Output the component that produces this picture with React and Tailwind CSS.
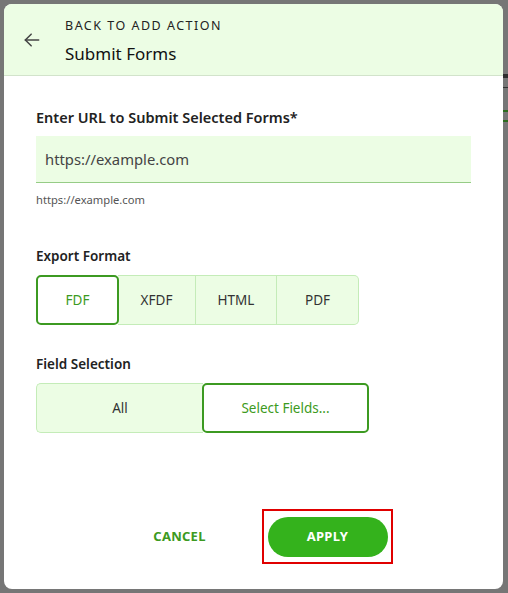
import React from "react";

export default function App() {
  const font = { fontFamily: '"Noto Sans", "Open Sans", sans-serif' };
  return (
    <div className="w-[508px] h-[593px] bg-[#767676] relative overflow-hidden" style={font}>
      {/* faint background elements on the right */}
      <div className="absolute right-0 top-[74px] w-[6px] h-[4px] bg-[#2e2e2e]" />
      <div className="absolute right-0 top-[87px] w-[6px] h-[1px] bg-[#333]" />
      <div className="absolute right-0 top-[110px] w-[6px] h-[12px] border-y-2 border-[#2d6b1e]" />
      <div className="absolute left-[4px] top-[4px] w-[499px] h-[585px] bg-white rounded-[8px] flex flex-col overflow-hidden">
        <div className="h-[72px] shrink-0 bg-[#ecfde4] border-b border-[#d2e3cb] flex items-center">
          <div className="w-[61px] flex justify-center pr-[6px]">
            <svg width="20" height="20" viewBox="0 0 24 24" fill="none" stroke="#444" strokeWidth="1.8" strokeLinecap="round" strokeLinejoin="round">
              <path d="M20 12H4" />
              <path d="M11 5l-7 7 7 7" />
            </svg>
          </div>
          <div className="flex flex-col pt-[3px]">
            <div className="text-[12.5px] tracking-[0.12em] text-[#222] leading-[16px]">BACK TO ADD ACTION</div>
            <div className="text-[17px] text-[#111] leading-[22px] mt-[9px]">Submit Forms</div>
          </div>
        </div>
        <div className="px-[32px] pt-[32px] flex-1 flex flex-col">
          <div className="text-[14.5px] font-semibold text-[#222] leading-[19px]">Enter URL to Submit Selected Forms*</div>
          <div className="mt-[9px] w-[435px] h-[47px] bg-[#ecfde4] border-b border-[#96cc86] flex items-center px-[9px]">
            <span className="text-[14.8px] text-[#444]">https://example.com</span>
          </div>
          <div className="mt-[9px] text-[11.2px] text-[#555] leading-[15px]">https://example.com</div>

          <div className="mt-[40px] text-[13.5px] font-semibold text-[#222] leading-[18px]">Export Format</div>
          <div className="mt-[10px] flex h-[50px] w-[324px]">
            <div className="w-[83px] border-2 border-[#3c9a21] rounded-[5px] bg-white flex items-center justify-center text-[13.5px] text-[#3c9a21] relative z-10">FDF</div>
            <div className="w-[78px] -ml-[1px] border border-[#c4ecb8] border-l-0 bg-[#ecfde4] flex items-center justify-center text-[13.5px] text-[#333]">XFDF</div>
            <div className="w-[81px] border border-[#c4ecb8] border-l-0 bg-[#ecfde4] flex items-center justify-center text-[13.5px] text-[#333]">HTML</div>
            <div className="w-[82px] border border-[#c4ecb8] border-l-0 rounded-r-[5px] bg-[#ecfde4] flex items-center justify-center text-[13.5px] text-[#333]">PDF</div>
          </div>

          <div className="mt-[30px] text-[13.5px] font-semibold text-[#222] leading-[18px]">Field Selection</div>
          <div className="mt-[10px] flex h-[50px] w-[333px]">
            <div className="w-[167px] border border-[#c4ecb8] border-r-0 rounded-l-[5px] bg-[#ecfde4] flex items-center justify-center text-[13.5px] text-[#333]">All</div>
            <div className="w-[167px] -ml-[1px] border-2 border-[#3c9a21] rounded-[5px] bg-white flex items-center justify-center text-[13.5px] text-[#3c9a21]">Select Fields...</div>
          </div>

          <div className="mt-auto mb-[25px] flex items-center">
            <div className="w-[117px] ml-[85px] text-center text-[13px] font-bold text-[#3c9a21] tracking-[0.02em]">CANCEL</div>
            <div className="ml-[24px] w-[131px] h-[55px] border-2 border-[#e00000] flex items-center justify-center">
              <div className="w-[120px] h-[40px] rounded-full bg-[#34b21c] flex items-center justify-center text-[13px] font-bold text-white tracking-[0.02em]">APPLY</div>
            </div>
          </div>
        </div>
      </div>
    </div>
  );
}
